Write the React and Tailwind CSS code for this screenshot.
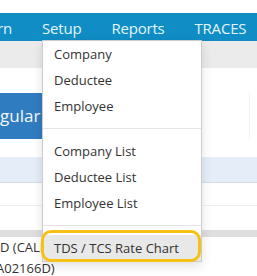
import React from 'react';

const items = [
  ['Company', 'Deductee', 'Employee'],
  ['Company List', 'Deductee List', 'Employee List'],
];

const MenuItem = ({ label, active }) => (
  <div className={`h-[26px] flex items-center pl-[11px] pt-px text-[13px] text-[#333] whitespace-nowrap ${active ? 'bg-[#e8e8e8]' : ''}`}>
    {label}
  </div>
);

const App = () => {
  return (
    <div className="relative w-[257px] h-[276px] overflow-hidden bg-white font-['Open_Sans',sans-serif]">
      {/* top strip */}
      <div className="h-[13px] bg-white" />

      {/* nav */}
      <nav className="h-[28px] bg-[#0f8dc4] text-[#e4f5fd] text-[15px] tracking-[-0.2px] flex items-center gap-[30px] whitespace-nowrap pt-[2px]">
        <div className="w-[12px] flex justify-end">
          <span>Return</span>
        </div>
        <span>Setup</span>
        <span>Reports</span>
        <span>TRACES</span>
      </nav>

      {/* sub bar */}
      <div className="h-[27px] bg-[#ebebeb]" />

      {/* toolbar */}
      <div className="h-[25px]" />
      <div className="h-[46px] flex justify-between">
        <button className="-ml-[32px] h-full px-[12px] bg-[#2f7cc0] text-[#f4f8fc] text-[17px] whitespace-nowrap">
          Regular Form
        </button>
        <div className="w-[8px] h-full border-l border-[#eef3f8]" />
      </div>
      <div className="h-[18px]" />

      {/* table */}
      <div className="h-[26px] bg-[#e4edf8] border-b border-[#d6dde6]" />
      <div className="h-[23px] border-b border-[#f0f0f0]" />
      <div className="h-[24px]" />
      <div className="h-[7px] bg-[#dedede]" />
      <div className="h-[22px] flex items-center text-[13px] text-[#333] whitespace-nowrap">
        D (CALFORD
      </div>
      <div className="h-[20px] flex items-center text-[13px] text-[#333] whitespace-nowrap -ml-[4px]">
        A02166D)
      </div>

      {/* dropdown */}
      <div className="absolute left-[42px] top-[40px] w-[160px] bg-white border border-[#cccccc] shadow-[0_4px_10px_rgba(0,0,0,0.12)]">
        {items.map((group, gi) => (
          <div key={gi}>
            {group.map((label) => (
              <MenuItem key={label} label={label} />
            ))}
            <div className="my-[9px] h-px bg-[#e5e5e5]" />
          </div>
        ))}
        <MenuItem label="TDS / TCS Rate Chart" active />
      </div>

      {/* highlight ring */}
      <div className="absolute left-[41px] top-[230px] w-[160px] h-[32px] border-[3px] border-[#f7c014] rounded-[10px]" />
    </div>
  );
};

export default App;
